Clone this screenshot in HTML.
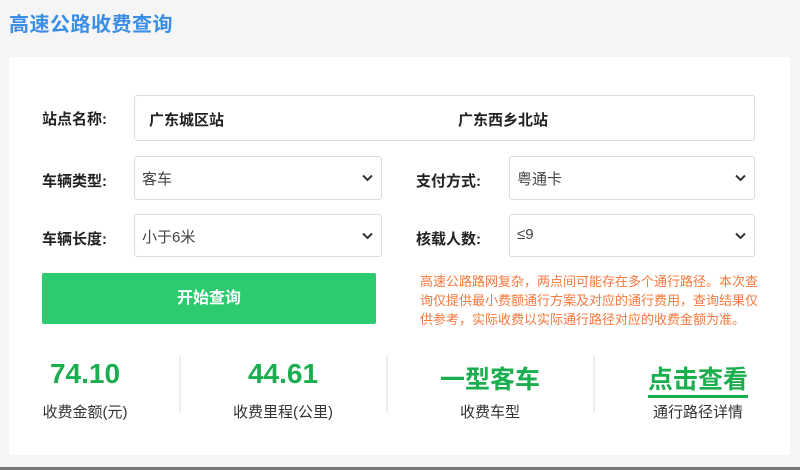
<!DOCTYPE html>
<html><head><meta charset="utf-8"><style>
*{margin:0;padding:0;box-sizing:border-box}
body{width:800px;height:470px;background:#f5f5f5;font-family:"Liberation Sans","Noto Sans CJK SC",sans-serif;position:relative;overflow:hidden;color:#333}
.abs{position:absolute}
h1{position:absolute;left:9px;top:8px;font-size:20px;font-weight:bold;color:#3a8ee6;letter-spacing:0.5px}
.panel{position:absolute;left:9px;top:57px;width:781px;height:398px;background:#fff}
.lab{position:absolute;font-size:15px;font-weight:bold;color:#222}
.box{position:absolute;border:1px solid #ddd;border-radius:3px;background:#fff;font-size:15px;color:#444}
.sel span{position:absolute;left:7px;top:11px}
.sel svg{position:absolute;right:8px;top:17px}
.btn{position:absolute;left:42px;top:273px;width:334px;height:51px;background:#2ccb6f;border-radius:2px;color:#fff;font-weight:bold;font-size:16px;text-align:center;line-height:51px}
.note{position:absolute;left:420px;top:272px;width:342px;font-size:13px;line-height:19px;color:#f5783c}
.val{position:absolute;width:200px;text-align:center;font-size:28px;font-weight:bold;color:#1aae4f;top:358px}
.cn{font-size:25px;top:360px}
.cap{position:absolute;width:200px;text-align:center;font-size:15px;color:#333;top:401px}
.div{position:absolute;top:356px;width:2px;height:57px;background:#eee}
.bot{position:absolute;left:0;top:467px;width:800px;height:3px;background:#777}
</style></head><body>
<h1>高速公路收费查询</h1>
<div class="panel"></div>
<div class="lab" style="left:42px;top:108px">站点名称:</div>
<div class="box" style="left:134px;top:95px;width:621px;height:46px">
<b class="abs" style="left:14px;top:13px;color:#222">广东城区站</b>
<b class="abs" style="left:323px;top:13px;color:#222">广东西乡北站</b></div>

<div class="lab" style="left:42px;top:170px">车辆类型:</div>
<div class="box sel" style="left:134px;top:156px;width:248px;height:44px"><span>客车</span><svg width="11" height="8"><path d="M1 1.5L5.5 6L10 1.5" stroke="#333" stroke-width="2" fill="none"/></svg></div>
<div class="lab" style="left:416px;top:170px">支付方式:</div>
<div class="box sel" style="left:509px;top:156px;width:246px;height:44px"><span>粤通卡</span><svg width="11" height="8"><path d="M1 1.5L5.5 6L10 1.5" stroke="#333" stroke-width="2" fill="none"/></svg></div>

<div class="lab" style="left:42px;top:228px">车辆长度:</div>
<div class="box sel" style="left:134px;top:214px;width:248px;height:43px"><span>小于6米</span><svg width="11" height="8"><path d="M1 1.5L5.5 6L10 1.5" stroke="#333" stroke-width="2" fill="none"/></svg></div>
<div class="lab" style="left:416px;top:228px">核载人数:</div>
<div class="box sel" style="left:509px;top:214px;width:246px;height:43px"><span>≤9</span><svg width="11" height="8"><path d="M1 1.5L5.5 6L10 1.5" stroke="#333" stroke-width="2" fill="none"/></svg></div>

<div class="btn">开始查询</div>
<div class="note">高速公路路网复杂，两点间可能存在多个通行路径。本次查询仅提供最小费额通行方案及对应的通行费用，查询结果仅供参考，实际收费以实际通行路径对应的收费金额为准。</div>

<div class="val" style="left:-15px">74.10</div><div class="cap" style="left:-15px">收费金额(元)</div>
<div class="div" style="left:179px"></div>
<div class="val" style="left:183px">44.61</div><div class="cap" style="left:183px">收费里程(公里)</div>
<div class="div" style="left:386px"></div>
<div class="val cn" style="left:390px">一型客车</div><div class="cap" style="left:390px">收费车型</div>
<div class="div" style="left:593px"></div>
<div class="val cn" style="left:598px"><span style="border-bottom:3px solid #1aae4f;padding-bottom:1px">点击查看</span></div><div class="cap" style="left:598px">通行路径详情</div>
<div class="bot"></div>
</body></html>
